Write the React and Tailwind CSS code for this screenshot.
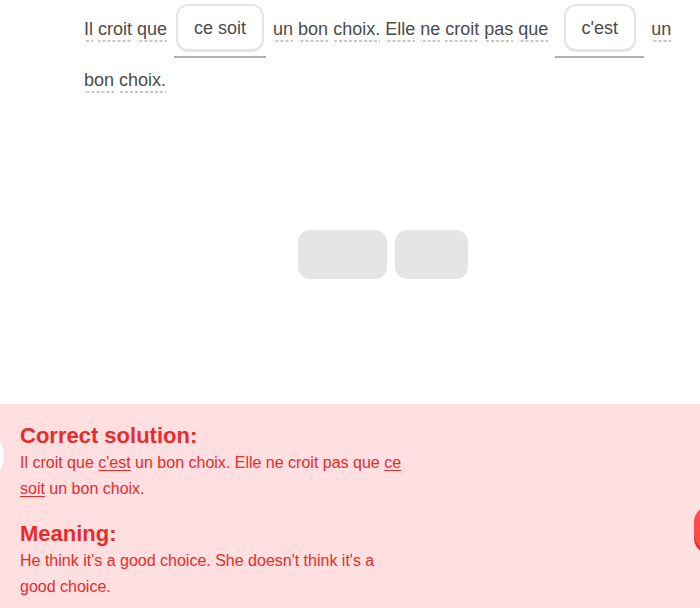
import React from 'react';

const font = { fontFamily: '"Liberation Sans", Arial, sans-serif' };

function Word({ children }) {
  return (
    <span className="mt-[11px] mb-[9px] pb-[2px] leading-[22px] bg-[linear-gradient(to_right,#c8c8c8_3px,transparent_3px)] bg-[length:5px_2px] bg-repeat-x bg-bottom">
      {children}
    </span>
  );
}

function Slot({ word, width }) {
  return (
    <div className="flex flex-col items-center pt-[4px] mx-[2px]" style={{ width }}>
      <div className="h-12 w-full flex justify-center">
        <div className="h-12 px-4 pt-[2px] flex items-center rounded-xl border-2 border-b-[3px] border-[#e5e5e5] bg-white text-[#4b4b4b]">
          {word}
        </div>
      </div>
      <div className="mt-[4px] h-[2px] w-full bg-[#afafaf]" />
    </div>
  );
}

export default function App() {
  const line1a = ['Il', 'croit', 'que'];
  const line1b = ['un', 'bon', 'choix.', 'Elle', 'ne', 'croit', 'pas', 'que'];
  const tail = ['un', 'bon', 'choix.'];

  return (
    <div className="relative w-[700px] h-[608px] overflow-hidden bg-white flex flex-col" style={font}>
      <div className="flex-1">
        <div className="ml-[84px] w-[606px] flex flex-wrap items-center gap-x-[5px] text-[18px] text-[#4b4b4b]">
          {line1a.map((w, i) => <Word key={'a' + i}>{w}</Word>)}
          <Slot word="ce soit" width={92} />
          {line1b.map((w, i) => <Word key={'b' + i}>{w}</Word>)}
          <Slot word="c'est" width={89} />
          {tail.map((w, i) => <Word key={'c' + i}>{w}</Word>)}
        </div>

        <div className="mt-[128px] pl-[298px] flex gap-2">
          <div className="w-[89px] h-[49px] rounded-xl bg-[#e5e5e5]" />
          <div className="w-[73px] h-[49px] rounded-xl bg-[#e5e5e5]" />
        </div>
      </div>

      <div className="relative h-[204px] bg-[#ffdfe0] pt-[18px] pl-5 text-[#ea2b2b]">
        <div className="absolute left-[-56px] top-[22px] w-[60px] h-[60px] rounded-full bg-white" />
        <div className="text-[22px] font-bold leading-[28px]">Correct solution:</div>
        <p className="w-[395px] text-[16px] leading-[26px]">
          Il croit que <span className="underline underline-offset-2">c'est</span> un bon choix. Elle ne croit pas que{' '}
          <span className="underline underline-offset-2">ce soit</span> un bon choix.
        </p>
        <div className="mt-[18px] text-[22px] font-bold leading-[28px]">Meaning:</div>
        <p className="w-[380px] text-[16px] leading-[26px]">
          He think it's a good choice. She doesn't think it's a good choice.
        </p>
        <div className="absolute left-[694px] top-[102px] w-[140px] h-[44px] rounded-2xl bg-[#ff4b4b] shadow-[0_4px_0_#ea2b2b]" />
      </div>
    </div>
  );
}
